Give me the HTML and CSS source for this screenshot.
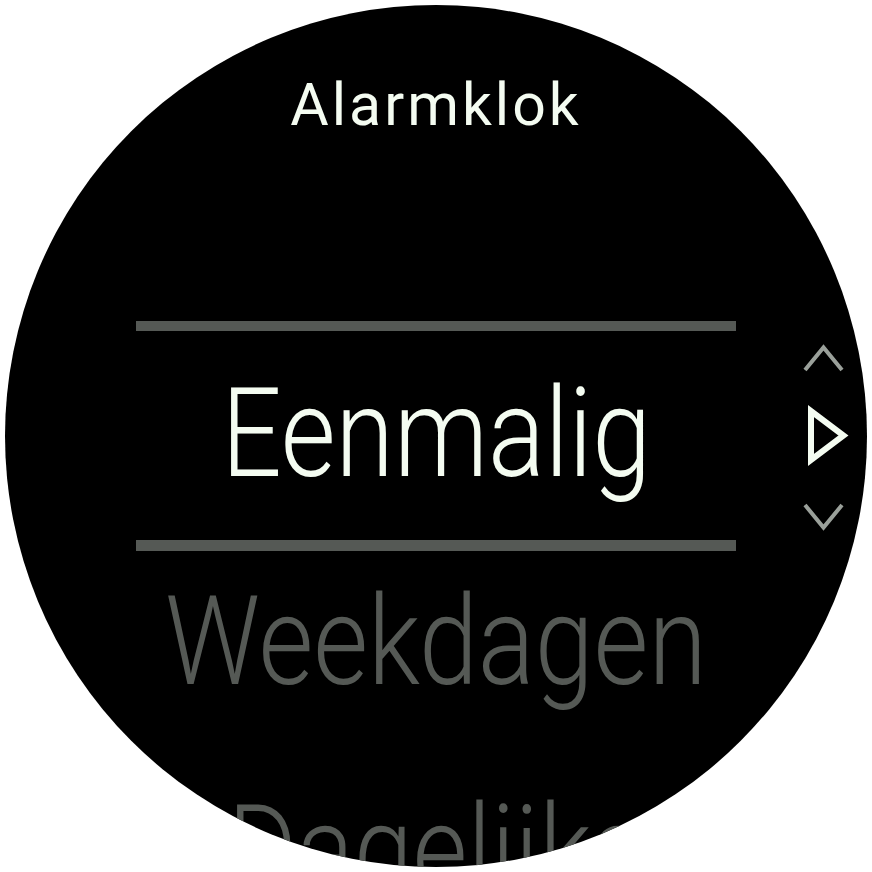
FILE: index.html
```html
<!DOCTYPE html>
<html>
<head>
<meta charset="utf-8">
<link rel="stylesheet" href="styles.css">
</head>
<body>
<div class="watch">
  <div class="title">Alarmklok</div>
  <div class="list">
    <div class="bar bar-top"></div>
    <div class="item item-selected"><span class="label">Eenmalig</span></div>
    <div class="bar bar-bottom"></div>
    <div class="item item-next"><span class="label">Weekdagen</span></div>
    <div class="item item-last"><span class="label">Dagelijks</span></div>
  </div>
  <svg class="scroll" width="50" height="200" viewBox="0 0 50 200">
    <polyline points="5,30 23.5,7.5 42,30" fill="none" stroke="#9aa09a" stroke-width="4"/>
    <polygon points="11,71 11,120 43.5,95.5" fill="none" stroke="#f4fcf1" stroke-width="6"/>
    <polyline points="5,165 23.5,187.5 42,165" fill="none" stroke="#9aa09a" stroke-width="4"/>
  </svg>
</div>
</body>
</html>
```

FILE: styles.css
```css
html, body {
  margin: 0;
  padding: 0;
  background: #ffffff;
}

.watch {
  position: relative;
  width: 862px;
  height: 862px;
  margin: 5px;
  border-radius: 50%;
  background: #000000;
  overflow: hidden;
  display: flex;
  flex-direction: column;
  align-items: center;
  font-family: Roboto, "Liberation Sans", sans-serif;
}

.title {
  margin-top: 65px;
  height: 70px;
  line-height: 70px;
  font-size: 59px;
  font-weight: 400;
  letter-spacing: 3px;
  color: #f4fcf1;
  white-space: nowrap;
}

.list {
  margin-top: 181px;
  width: 600px;
  display: flex;
  flex-direction: column;
  align-items: center;
}

.bar {
  width: 600px;
  background: #555955;
  flex: none;
}

.bar-top {
  height: 10px;
}

.bar-bottom {
  height: 11px;
}

.item {
  width: 862px;
  text-align: center;
  font-size: 124px;
  font-weight: 300;
  white-space: nowrap;
  flex: none;
}

.label {
  display: inline-block;
  transform: scaleX(0.855);
}

.item-selected {
  height: 209px;
  line-height: 205px;
  color: #f4fcf1;
}

.item-next {
  height: 181px;
  line-height: 181px;
  color: #555955;
}

.item-last {
  height: 237px;
  line-height: 237px;
  color: #555955;
}

.scroll {
  position: absolute;
  left: 795px;
  top: 335px;
}
```
